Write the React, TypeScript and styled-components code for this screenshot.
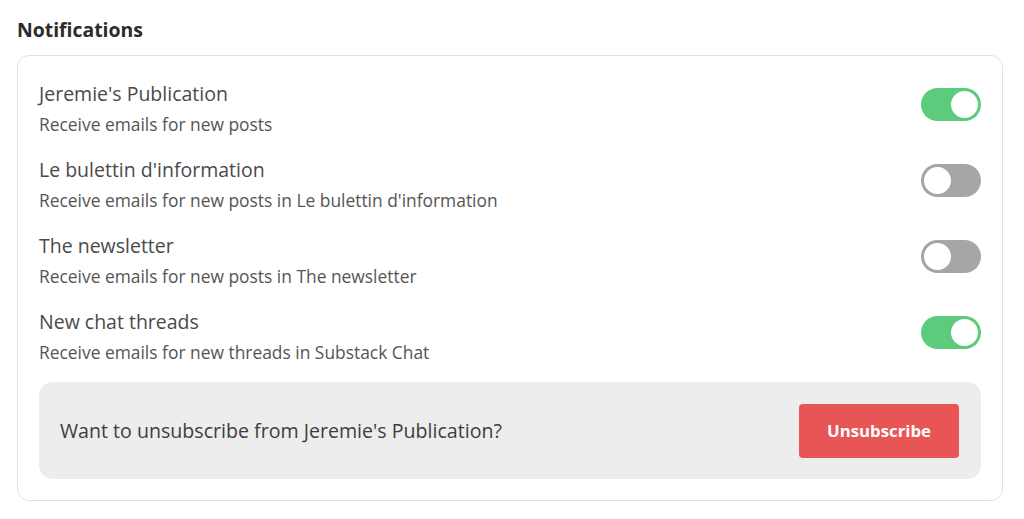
import styled, { createGlobalStyle } from "styled-components";

const GlobalStyle = createGlobalStyle`
  body {
    margin: 0;
    background: #ffffff;
    font-family: "Open Sans", "Noto Sans", sans-serif;
  }
`;

interface Item {
  title: string;
  description: string;
  on: boolean;
}

const items: Item[] = [
  { title: "Jeremie's Publication", description: "Receive emails for new posts", on: true },
  {
    title: "Le bulettin d'information",
    description: "Receive emails for new posts in Le bulettin d'information",
    on: false,
  },
  {
    title: "The newsletter",
    description: "Receive emails for new posts in The newsletter",
    on: false,
  },
  {
    title: "New chat threads",
    description: "Receive emails for new threads in Substack Chat",
    on: true,
  },
];

export default function App() {
  return (
    <>
      <GlobalStyle />
      <Page>
        <Heading>Notifications</Heading>
        <Card>
          <List>
            {items.map((item) => (
              <Row key={item.title}>
                <Texts>
                  <Title>{item.title}</Title>
                  <Description>{item.description}</Description>
                </Texts>
                <Toggle $on={item.on}>
                  <Knob $on={item.on} />
                </Toggle>
              </Row>
            ))}
          </List>
          <UnsubscribeBox>
            <UnsubscribeText>Want to unsubscribe from Jeremie's Publication?</UnsubscribeText>
            <UnsubscribeButton>Unsubscribe</UnsubscribeButton>
          </UnsubscribeBox>
        </Card>
      </Page>
    </>
  );
}

const Page = styled.div`
  padding: 16px 21px 0 17px;
`;

const Heading = styled.h2`
  margin: 0 0 11px;
  font-size: 19.4px;
  line-height: 28px;
  font-weight: 700;
  color: #2b2b2b;
`;

const Card = styled.div`
  border: 1px solid #e2e2e2;
  border-radius: 12px;
  padding: 21px;
  display: flex;
  flex-direction: column;
  gap: 17px;
`;

const List = styled.div`
  display: flex;
  flex-direction: column;
  gap: 16px;
`;

const Row = styled.div`
  display: flex;
  align-items: center;
  justify-content: space-between;
  height: 60px;
`;

const Texts = styled.div`
  display: flex;
  flex-direction: column;
`;

const Title = styled.div`
  font-size: 19.5px;
  line-height: 34px;
  color: #4a4a4a;
`;

const Description = styled.div`
  font-size: 17.4px;
  line-height: 26px;
  color: #555555;
`;

const Toggle = styled.div<{ $on: boolean }>`
  position: relative;
  width: 60px;
  height: 33px;
  border-radius: 17px;
  margin-bottom: 5px;
  background: ${(p) => (p.$on ? "#5ccb7b" : "#a6a6a6")};
  flex-shrink: 0;
`;

const Knob = styled.div<{ $on: boolean }>`
  position: absolute;
  top: 1px;
  left: ${(p) => (p.$on ? "28px" : "1px")};
  width: 27px;
  height: 27px;
  border-radius: 50%;
  background: #ffffff;
  border: 2px solid ${(p) => (p.$on ? "#5ccb7b" : "#a6a6a6")};
`;

const UnsubscribeBox = styled.div`
  background: #ededed;
  border-radius: 14px;
  height: 97px;
  display: flex;
  align-items: center;
  justify-content: space-between;
  padding: 0 22px 0 21px;
  box-sizing: border-box;
`;

const UnsubscribeText = styled.div`
  font-size: 19.6px;
  color: #3e3e3e;
`;

const UnsubscribeButton = styled.button`
  width: 160px;
  height: 54px;
  border: none;
  border-radius: 4px;
  background: #e85555;
  color: #ffffff;
  font-family: "Open Sans", "Noto Sans", sans-serif;
  font-size: 16.8px;
  font-weight: 700;
  cursor: pointer;
`;
